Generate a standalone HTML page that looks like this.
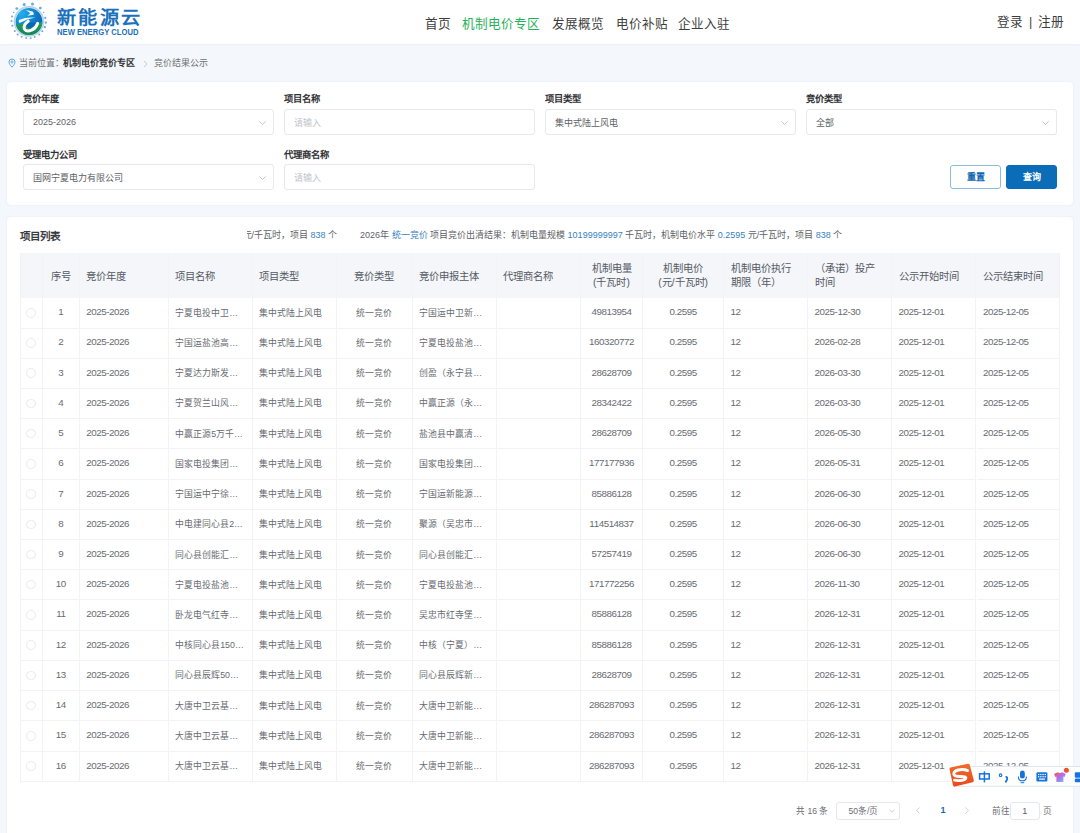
<!DOCTYPE html>
<html lang="zh-CN">
<head>
<meta charset="utf-8">
<style>
*{box-sizing:border-box;margin:0;padding:0}
html,body{width:1080px;height:833px;overflow:hidden}
body{background:#f4f7fc;font-family:"Liberation Sans",sans-serif;color:#606266;position:relative}
.abs{position:absolute;white-space:nowrap}
#hdr{position:absolute;left:0;top:0;width:1080px;height:44px;background:#fff;box-shadow:0 1px 2px rgba(0,40,100,.04)}
.brand{position:absolute;left:57px;top:4.5px;font-size:19.5px;font-weight:bold;color:#1b71bb;letter-spacing:1.6px;line-height:24px;transform:scale(.985,.93);transform-origin:0 20px}
.brand-en{position:absolute;left:57px;top:26.6px;font-size:9px;font-weight:bold;color:#1b71bb;line-height:10px;letter-spacing:0;transform:scaleX(.85);transform-origin:0 0}
.nav{position:absolute;top:15.5px;font-size:12.6px;line-height:17px;color:#3d3d3d}
.nav.on{color:#1fb257}
.bc{position:absolute;top:58.2px;font-size:9px;line-height:11px;color:#707070}
.card{position:absolute;left:7px;width:1066px;background:#fff;border-radius:4px;box-shadow:0 0 1.5px rgba(120,160,220,.22)}
.lbl{position:absolute;font-size:9.3px;font-weight:bold;color:#303133;line-height:12px;margin-top:0.3px}
.inp{position:absolute;width:250.5px;height:25.5px;border:1px solid #e6e8ed;border-radius:3px;background:#fff}
.inp span{position:absolute;left:9px;top:7px;font-size:9px;line-height:12px;color:#606266}
.inp span.ph{color:#c0c4cc}
.chev{position:absolute;right:6.5px;top:10.5px;width:7px;height:4px}
.btn{position:absolute;top:165px;width:51px;height:24px;border-radius:3px;font-size:9px;font-weight:bold;text-align:center;line-height:22px}
#tbl{position:absolute;left:20px;top:253.3px;width:1039.3px;height:528.52px}
.thead{position:absolute;background:#f4f6fa}
.c{position:absolute;border-right:1px solid #f1f3f7;border-bottom:1px solid #f1f3f7;display:flex;align-items:center;padding:0 6.4px;font-size:8.85px;color:#686b71;overflow:hidden;white-space:nowrap}
.c.h{font-size:10.3px;line-height:14.5px;color:#555a63;border-bottom-color:#f4f6fa}
.c.h span, .c.b span{display:block;width:100%}
.c.b span{position:relative;top:-0.6px}
.c.n span{top:-1.2px}
.c.n{font-size:9.8px;letter-spacing:-0.45px}
.radio{display:inline-block;width:9.5px;height:9.5px;border:1px solid #e8eaef;border-radius:50%;vertical-align:middle}
</style>
</head>
<body>
<div id="hdr">
  <svg class="abs" style="left:9px;top:1px" width="40" height="40" viewBox="0 0 40 40">
    <defs>
      <radialGradient id="gb" cx="0.3" cy="0.3" r="0.75">
        <stop offset="0" stop-color="#22b0ea"/>
        <stop offset="0.55" stop-color="#0d78c8"/>
        <stop offset="1" stop-color="#0a56a8"/>
      </radialGradient>
      <linearGradient id="gg" x1="0" y1="0" x2="0" y2="1">
        <stop offset="0" stop-color="#23a060"/>
        <stop offset="1" stop-color="#0c7a44"/>
      </linearGradient>
      <clipPath id="cp"><circle cx="20" cy="20.4" r="13.4"/></clipPath>
    </defs>
    <circle cx="20" cy="20.4" r="14.5" fill="none" stroke="#b5d3ec" stroke-width="1.6"/>
    <g fill="#6aaade">
      <circle cx="15.2" cy="3.6" r="1.5"/><circle cx="23.5" cy="3.1" r="1.5"/>
      <circle cx="7.8" cy="7.6" r="1.4"/><circle cx="31.3" cy="7.1" r="1.4"/>
      <circle cx="4.6" cy="11.4" r=".7"/><circle cx="34.6" cy="11.4" r=".7"/>
      <circle cx="3" cy="15.6" r="1"/><circle cx="2.5" cy="19.9" r="1"/><circle cx="3.3" cy="24.7" r="1"/>
      <circle cx="36.3" cy="16.9" r="1.1"/><circle cx="36.8" cy="21.7" r="1.1"/><circle cx="35.8" cy="26.2" r="1.1"/>
      <circle cx="5.8" cy="30" r="1"/><circle cx="8.6" cy="33.5" r="1"/><circle cx="12.6" cy="35.8" r="1"/><circle cx="17.2" cy="37" r="1"/><circle cx="21.7" cy="37.3" r="1"/><circle cx="25.7" cy="36" r="1"/><circle cx="30.3" cy="33.5" r="1"/><circle cx="33.3" cy="30.3" r="1"/>
    </g>
    <g clip-path="url(#cp)">
      <rect x="0" y="0" width="40" height="40" fill="url(#gb)"/>
      <path d="M0 23.9 L40 20.6 L40 40 L0 40Z" fill="url(#gg)"/>
      <path d="M16.9 9.1 L23.6 10.4 Q25.2 11.6 24.7 13.7 L18.4 14.8 L21.3 12.3 Z" fill="#fff" opacity=".93"/>
      <path d="M9.9 18.9 Q18 15.6 26.8 16.8 Q19 17.6 15.5 19.8 Q12.5 21 10.3 22 Q9.3 20.5 9.9 18.9Z" fill="#fff" opacity=".96"/>
      <path d="M18.6 21.5 Q16.6 25.4 18.8 26.8 Q21.8 27.6 25.2 25.2 Q26.8 23.6 27.4 21.6 Z" fill="#0c66b8"/>
      <path d="M19.2 20.2 Q14 23.6 15.4 28 Q17.4 31.2 22.6 29.2 Q27 27 28.6 22.4" fill="none" stroke="#fff" stroke-width="3" stroke-linecap="round"/>
    </g>
  </svg>
  <div class="brand">新能源云</div>
  <div class="brand-en">NEW ENERGY CLOUD</div>
  <div class="nav" style="left:425px">首页</div>
  <div class="nav on" style="left:462px">机制电价专区</div>
  <div class="nav" style="left:551.5px">发展概览</div>
  <div class="nav" style="left:615.5px">电价补贴</div>
  <div class="nav" style="left:678px;top:16px">企业入驻</div>
  <div class="nav" style="left:997px;top:13.8px">登录 <span style="padding:0 2.4px">|</span> 注册</div>
</div>

<svg class="abs" style="left:8px;top:58px" width="8" height="10" viewBox="0 0 8 10"><path d="M4 9.2 C2 7 1 5.5 1 4 A3 3 0 0 1 7 4 C7 5.5 6 7 4 9.2Z" fill="none" stroke="#5a9fd6" stroke-width=".9"/><circle cx="4" cy="4" r="1.1" fill="none" stroke="#5a9fd6" stroke-width=".8"/></svg>
<div class="bc" style="left:19px">当前位置：</div>
<div class="bc" style="left:63px;color:#303133;font-weight:bold">机制电价竞价专区</div>
<svg class="abs" style="left:143px;top:60px" width="5" height="8" viewBox="0 0 5 8"><path d="M1 1 L4 4 L1 7" fill="none" stroke="#b8bcc4" stroke-width=".8"/></svg>
<div class="bc" style="left:153.5px">竞价结果公示</div>

<div class="card" style="top:81.5px;height:123px">
</div>
<div class="lbl" style="left:23px;top:93px">竞价年度</div>
<div class="inp" style="left:23px;top:109px"><span style="top:6.4px">2025-2026</span><svg class="chev" viewBox="0 0 7 4"><path d="M.4 .4 L3.5 3.5 L6.6 .4" fill="none" stroke="#b8bcc4" stroke-width=".85"/></svg></div>
<div class="lbl" style="left:284px;top:93px">项目名称</div>
<div class="inp" style="left:284px;top:109px"><span class="ph">请输入</span></div>
<div class="lbl" style="left:545px;top:93px">项目类型</div>
<div class="inp" style="left:545px;top:109px"><span>集中式陆上风电</span><svg class="chev" viewBox="0 0 7 4"><path d="M.4 .4 L3.5 3.5 L6.6 .4" fill="none" stroke="#b8bcc4" stroke-width=".85"/></svg></div>
<div class="lbl" style="left:806px;top:93px">竞价类型</div>
<div class="inp" style="left:806px;top:109px"><span>全部</span><svg class="chev" viewBox="0 0 7 4"><path d="M.4 .4 L3.5 3.5 L6.6 .4" fill="none" stroke="#b8bcc4" stroke-width=".85"/></svg></div>

<div class="lbl" style="left:23px;top:148.5px">受理电力公司</div>
<div class="inp" style="left:23px;top:164px"><span>国网宁夏电力有限公司</span><svg class="chev" viewBox="0 0 7 4"><path d="M.4 .4 L3.5 3.5 L6.6 .4" fill="none" stroke="#b8bcc4" stroke-width=".85"/></svg></div>
<div class="lbl" style="left:284px;top:148.5px">代理商名称</div>
<div class="inp" style="left:284px;top:164px"><span class="ph">请输入</span></div>

<div class="btn" style="left:950px;border:1px solid #8cbbe0;color:#1168b3;background:#fff">重置</div>
<div class="btn" style="left:1006px;background:#0b6cb8;color:#fff;border:1px solid #0b6cb8">查询</div>

<div class="card" style="top:217px;height:700px"></div>
<div class="abs" style="left:20px;top:229.6px;font-size:10.5px;font-weight:bold;color:#383a3e;line-height:13px">项目列表</div>
<div class="abs" style="left:247px;top:229px;width:810px;height:13px;overflow:hidden">
  <div class="abs" style="left:-4.5px;top:0;font-size:9px;line-height:13px;color:#606266">元/千瓦时，项目 <b style="font-weight:normal;color:#3a7fc1">838</b> 个<span style="display:inline-block;width:23px"></span>2026年 <b style="font-weight:normal;color:#3a7fc1">统一竞价</b> 项目竞价出清结果：机制电量规模 <b style="font-weight:normal;color:#3a7fc1">10199999997</b> 千瓦时，机制电价水平 <b style="font-weight:normal;color:#3a7fc1">0.2595</b> 元/千瓦时，项目 <b style="font-weight:normal;color:#3a7fc1">838</b> 个</div>
</div>

<div id="tbl">
<div class="abs" style="left:0;top:0;width:1px;height:528.52px;background:#f1f3f7;z-index:2"></div>
<div class="thead" style="left:0;top:0;width:1039.80px;height:45.0px"></div>
<div class="c h" style="left:0.00px;top:0.00px;width:22.90px;height:45.00px;text-align:center"><span style="position:relative;top:2.1px"></span></div>
<div class="c h" style="left:22.90px;top:0.00px;width:36.90px;height:45.00px;text-align:center"><span style="position:relative;top:2.1px">序号</span></div>
<div class="c h" style="left:59.80px;top:0.00px;width:89.00px;height:45.00px;text-align:left"><span style="position:relative;top:2.1px">竞价年度</span></div>
<div class="c h" style="left:148.80px;top:0.00px;width:83.90px;height:45.00px;text-align:left"><span style="position:relative;top:2.1px">项目名称</span></div>
<div class="c h" style="left:232.70px;top:0.00px;width:84.10px;height:45.00px;text-align:left"><span style="position:relative;top:2.1px">项目类型</span></div>
<div class="c h" style="left:316.80px;top:0.00px;width:76.00px;height:45.00px;text-align:center"><span style="position:relative;top:2.1px">竞价类型</span></div>
<div class="c h" style="left:392.80px;top:0.00px;width:83.90px;height:45.00px;text-align:left"><span style="position:relative;top:2.1px">竞价申报主体</span></div>
<div class="c h" style="left:476.70px;top:0.00px;width:84.30px;height:45.00px;text-align:left"><span style="position:relative;top:2.1px">代理商名称</span></div>
<div class="c h" style="left:561.00px;top:0.00px;width:62.00px;height:45.00px;text-align:center"><span style="position:relative;top:1.1px">机制电量<br>(千瓦时)</span></div>
<div class="c h" style="left:623.00px;top:0.00px;width:81.20px;height:45.00px;text-align:center"><span style="position:relative;top:1.1px">机制电价<br>(元/千瓦时)</span></div>
<div class="c h" style="left:704.20px;top:0.00px;width:84.00px;height:45.00px;text-align:left"><span style="position:relative;top:1.1px">机制电价执行<br>期限（年）</span></div>
<div class="c h" style="left:788.20px;top:0.00px;width:84.00px;height:45.00px;text-align:left"><span style="position:relative;top:1.1px">（承诺）投产<br>时间</span></div>
<div class="c h" style="left:872.20px;top:0.00px;width:84.30px;height:45.00px;text-align:left"><span style="position:relative;top:2.1px">公示开始时间</span></div>
<div class="c h" style="left:956.50px;top:0.00px;width:83.30px;height:45.00px;text-align:left"><span style="position:relative;top:2.1px">公示结束时间</span></div>
<div class="c b" style="left:0.00px;top:45.00px;width:22.90px;height:30.22px;text-align:center"><span><i class="radio"></i></span></div>
<div class="c b n" style="left:22.90px;top:45.00px;width:36.90px;height:30.22px;text-align:center"><span>1</span></div>
<div class="c b n" style="left:59.80px;top:45.00px;width:89.00px;height:30.22px;text-align:left"><span>2025-2026</span></div>
<div class="c b" style="left:148.80px;top:45.00px;width:83.90px;height:30.22px;text-align:left"><span>宁夏电投中卫…</span></div>
<div class="c b" style="left:232.70px;top:45.00px;width:84.10px;height:30.22px;text-align:left"><span>集中式陆上风电</span></div>
<div class="c b" style="left:316.80px;top:45.00px;width:76.00px;height:30.22px;text-align:center"><span>统一竞价</span></div>
<div class="c b" style="left:392.80px;top:45.00px;width:83.90px;height:30.22px;text-align:left"><span>宁国运中卫新…</span></div>
<div class="c b" style="left:476.70px;top:45.00px;width:84.30px;height:30.22px;text-align:left"><span></span></div>
<div class="c b n" style="left:561.00px;top:45.00px;width:62.00px;height:30.22px;text-align:center"><span>49813954</span></div>
<div class="c b n" style="left:623.00px;top:45.00px;width:81.20px;height:30.22px;text-align:center"><span>0.2595</span></div>
<div class="c b n" style="left:704.20px;top:45.00px;width:84.00px;height:30.22px;text-align:left"><span>12</span></div>
<div class="c b n" style="left:788.20px;top:45.00px;width:84.00px;height:30.22px;text-align:left"><span>2025-12-30</span></div>
<div class="c b n" style="left:872.20px;top:45.00px;width:84.30px;height:30.22px;text-align:left"><span>2025-12-01</span></div>
<div class="c b n" style="left:956.50px;top:45.00px;width:83.30px;height:30.22px;text-align:left"><span>2025-12-05</span></div>
<div class="c b" style="left:0.00px;top:75.22px;width:22.90px;height:30.22px;text-align:center"><span><i class="radio"></i></span></div>
<div class="c b n" style="left:22.90px;top:75.22px;width:36.90px;height:30.22px;text-align:center"><span>2</span></div>
<div class="c b n" style="left:59.80px;top:75.22px;width:89.00px;height:30.22px;text-align:left"><span>2025-2026</span></div>
<div class="c b" style="left:148.80px;top:75.22px;width:83.90px;height:30.22px;text-align:left"><span>宁国运盐池高…</span></div>
<div class="c b" style="left:232.70px;top:75.22px;width:84.10px;height:30.22px;text-align:left"><span>集中式陆上风电</span></div>
<div class="c b" style="left:316.80px;top:75.22px;width:76.00px;height:30.22px;text-align:center"><span>统一竞价</span></div>
<div class="c b" style="left:392.80px;top:75.22px;width:83.90px;height:30.22px;text-align:left"><span>宁夏电投盐池…</span></div>
<div class="c b" style="left:476.70px;top:75.22px;width:84.30px;height:30.22px;text-align:left"><span></span></div>
<div class="c b n" style="left:561.00px;top:75.22px;width:62.00px;height:30.22px;text-align:center"><span>160320772</span></div>
<div class="c b n" style="left:623.00px;top:75.22px;width:81.20px;height:30.22px;text-align:center"><span>0.2595</span></div>
<div class="c b n" style="left:704.20px;top:75.22px;width:84.00px;height:30.22px;text-align:left"><span>12</span></div>
<div class="c b n" style="left:788.20px;top:75.22px;width:84.00px;height:30.22px;text-align:left"><span>2026-02-28</span></div>
<div class="c b n" style="left:872.20px;top:75.22px;width:84.30px;height:30.22px;text-align:left"><span>2025-12-01</span></div>
<div class="c b n" style="left:956.50px;top:75.22px;width:83.30px;height:30.22px;text-align:left"><span>2025-12-05</span></div>
<div class="c b" style="left:0.00px;top:105.44px;width:22.90px;height:30.22px;text-align:center"><span><i class="radio"></i></span></div>
<div class="c b n" style="left:22.90px;top:105.44px;width:36.90px;height:30.22px;text-align:center"><span>3</span></div>
<div class="c b n" style="left:59.80px;top:105.44px;width:89.00px;height:30.22px;text-align:left"><span>2025-2026</span></div>
<div class="c b" style="left:148.80px;top:105.44px;width:83.90px;height:30.22px;text-align:left"><span>宁夏达力斯发…</span></div>
<div class="c b" style="left:232.70px;top:105.44px;width:84.10px;height:30.22px;text-align:left"><span>集中式陆上风电</span></div>
<div class="c b" style="left:316.80px;top:105.44px;width:76.00px;height:30.22px;text-align:center"><span>统一竞价</span></div>
<div class="c b" style="left:392.80px;top:105.44px;width:83.90px;height:30.22px;text-align:left"><span>创盈（永宁县…</span></div>
<div class="c b" style="left:476.70px;top:105.44px;width:84.30px;height:30.22px;text-align:left"><span></span></div>
<div class="c b n" style="left:561.00px;top:105.44px;width:62.00px;height:30.22px;text-align:center"><span>28628709</span></div>
<div class="c b n" style="left:623.00px;top:105.44px;width:81.20px;height:30.22px;text-align:center"><span>0.2595</span></div>
<div class="c b n" style="left:704.20px;top:105.44px;width:84.00px;height:30.22px;text-align:left"><span>12</span></div>
<div class="c b n" style="left:788.20px;top:105.44px;width:84.00px;height:30.22px;text-align:left"><span>2026-03-30</span></div>
<div class="c b n" style="left:872.20px;top:105.44px;width:84.30px;height:30.22px;text-align:left"><span>2025-12-01</span></div>
<div class="c b n" style="left:956.50px;top:105.44px;width:83.30px;height:30.22px;text-align:left"><span>2025-12-05</span></div>
<div class="c b" style="left:0.00px;top:135.66px;width:22.90px;height:30.22px;text-align:center"><span><i class="radio"></i></span></div>
<div class="c b n" style="left:22.90px;top:135.66px;width:36.90px;height:30.22px;text-align:center"><span>4</span></div>
<div class="c b n" style="left:59.80px;top:135.66px;width:89.00px;height:30.22px;text-align:left"><span>2025-2026</span></div>
<div class="c b" style="left:148.80px;top:135.66px;width:83.90px;height:30.22px;text-align:left"><span>宁夏贺兰山风…</span></div>
<div class="c b" style="left:232.70px;top:135.66px;width:84.10px;height:30.22px;text-align:left"><span>集中式陆上风电</span></div>
<div class="c b" style="left:316.80px;top:135.66px;width:76.00px;height:30.22px;text-align:center"><span>统一竞价</span></div>
<div class="c b" style="left:392.80px;top:135.66px;width:83.90px;height:30.22px;text-align:left"><span>中赢正源（永…</span></div>
<div class="c b" style="left:476.70px;top:135.66px;width:84.30px;height:30.22px;text-align:left"><span></span></div>
<div class="c b n" style="left:561.00px;top:135.66px;width:62.00px;height:30.22px;text-align:center"><span>28342422</span></div>
<div class="c b n" style="left:623.00px;top:135.66px;width:81.20px;height:30.22px;text-align:center"><span>0.2595</span></div>
<div class="c b n" style="left:704.20px;top:135.66px;width:84.00px;height:30.22px;text-align:left"><span>12</span></div>
<div class="c b n" style="left:788.20px;top:135.66px;width:84.00px;height:30.22px;text-align:left"><span>2026-03-30</span></div>
<div class="c b n" style="left:872.20px;top:135.66px;width:84.30px;height:30.22px;text-align:left"><span>2025-12-01</span></div>
<div class="c b n" style="left:956.50px;top:135.66px;width:83.30px;height:30.22px;text-align:left"><span>2025-12-05</span></div>
<div class="c b" style="left:0.00px;top:165.88px;width:22.90px;height:30.22px;text-align:center"><span><i class="radio"></i></span></div>
<div class="c b n" style="left:22.90px;top:165.88px;width:36.90px;height:30.22px;text-align:center"><span>5</span></div>
<div class="c b n" style="left:59.80px;top:165.88px;width:89.00px;height:30.22px;text-align:left"><span>2025-2026</span></div>
<div class="c b" style="left:148.80px;top:165.88px;width:83.90px;height:30.22px;text-align:left"><span>中赢正源5万千…</span></div>
<div class="c b" style="left:232.70px;top:165.88px;width:84.10px;height:30.22px;text-align:left"><span>集中式陆上风电</span></div>
<div class="c b" style="left:316.80px;top:165.88px;width:76.00px;height:30.22px;text-align:center"><span>统一竞价</span></div>
<div class="c b" style="left:392.80px;top:165.88px;width:83.90px;height:30.22px;text-align:left"><span>盐池县中赢清…</span></div>
<div class="c b" style="left:476.70px;top:165.88px;width:84.30px;height:30.22px;text-align:left"><span></span></div>
<div class="c b n" style="left:561.00px;top:165.88px;width:62.00px;height:30.22px;text-align:center"><span>28628709</span></div>
<div class="c b n" style="left:623.00px;top:165.88px;width:81.20px;height:30.22px;text-align:center"><span>0.2595</span></div>
<div class="c b n" style="left:704.20px;top:165.88px;width:84.00px;height:30.22px;text-align:left"><span>12</span></div>
<div class="c b n" style="left:788.20px;top:165.88px;width:84.00px;height:30.22px;text-align:left"><span>2026-05-30</span></div>
<div class="c b n" style="left:872.20px;top:165.88px;width:84.30px;height:30.22px;text-align:left"><span>2025-12-01</span></div>
<div class="c b n" style="left:956.50px;top:165.88px;width:83.30px;height:30.22px;text-align:left"><span>2025-12-05</span></div>
<div class="c b" style="left:0.00px;top:196.10px;width:22.90px;height:30.22px;text-align:center"><span><i class="radio"></i></span></div>
<div class="c b n" style="left:22.90px;top:196.10px;width:36.90px;height:30.22px;text-align:center"><span>6</span></div>
<div class="c b n" style="left:59.80px;top:196.10px;width:89.00px;height:30.22px;text-align:left"><span>2025-2026</span></div>
<div class="c b" style="left:148.80px;top:196.10px;width:83.90px;height:30.22px;text-align:left"><span>国家电投集团…</span></div>
<div class="c b" style="left:232.70px;top:196.10px;width:84.10px;height:30.22px;text-align:left"><span>集中式陆上风电</span></div>
<div class="c b" style="left:316.80px;top:196.10px;width:76.00px;height:30.22px;text-align:center"><span>统一竞价</span></div>
<div class="c b" style="left:392.80px;top:196.10px;width:83.90px;height:30.22px;text-align:left"><span>国家电投集团…</span></div>
<div class="c b" style="left:476.70px;top:196.10px;width:84.30px;height:30.22px;text-align:left"><span></span></div>
<div class="c b n" style="left:561.00px;top:196.10px;width:62.00px;height:30.22px;text-align:center"><span>177177936</span></div>
<div class="c b n" style="left:623.00px;top:196.10px;width:81.20px;height:30.22px;text-align:center"><span>0.2595</span></div>
<div class="c b n" style="left:704.20px;top:196.10px;width:84.00px;height:30.22px;text-align:left"><span>12</span></div>
<div class="c b n" style="left:788.20px;top:196.10px;width:84.00px;height:30.22px;text-align:left"><span>2026-05-31</span></div>
<div class="c b n" style="left:872.20px;top:196.10px;width:84.30px;height:30.22px;text-align:left"><span>2025-12-01</span></div>
<div class="c b n" style="left:956.50px;top:196.10px;width:83.30px;height:30.22px;text-align:left"><span>2025-12-05</span></div>
<div class="c b" style="left:0.00px;top:226.32px;width:22.90px;height:30.22px;text-align:center"><span><i class="radio"></i></span></div>
<div class="c b n" style="left:22.90px;top:226.32px;width:36.90px;height:30.22px;text-align:center"><span>7</span></div>
<div class="c b n" style="left:59.80px;top:226.32px;width:89.00px;height:30.22px;text-align:left"><span>2025-2026</span></div>
<div class="c b" style="left:148.80px;top:226.32px;width:83.90px;height:30.22px;text-align:left"><span>宁国运中宁徐…</span></div>
<div class="c b" style="left:232.70px;top:226.32px;width:84.10px;height:30.22px;text-align:left"><span>集中式陆上风电</span></div>
<div class="c b" style="left:316.80px;top:226.32px;width:76.00px;height:30.22px;text-align:center"><span>统一竞价</span></div>
<div class="c b" style="left:392.80px;top:226.32px;width:83.90px;height:30.22px;text-align:left"><span>宁国运新能源…</span></div>
<div class="c b" style="left:476.70px;top:226.32px;width:84.30px;height:30.22px;text-align:left"><span></span></div>
<div class="c b n" style="left:561.00px;top:226.32px;width:62.00px;height:30.22px;text-align:center"><span>85886128</span></div>
<div class="c b n" style="left:623.00px;top:226.32px;width:81.20px;height:30.22px;text-align:center"><span>0.2595</span></div>
<div class="c b n" style="left:704.20px;top:226.32px;width:84.00px;height:30.22px;text-align:left"><span>12</span></div>
<div class="c b n" style="left:788.20px;top:226.32px;width:84.00px;height:30.22px;text-align:left"><span>2026-06-30</span></div>
<div class="c b n" style="left:872.20px;top:226.32px;width:84.30px;height:30.22px;text-align:left"><span>2025-12-01</span></div>
<div class="c b n" style="left:956.50px;top:226.32px;width:83.30px;height:30.22px;text-align:left"><span>2025-12-05</span></div>
<div class="c b" style="left:0.00px;top:256.54px;width:22.90px;height:30.22px;text-align:center"><span><i class="radio"></i></span></div>
<div class="c b n" style="left:22.90px;top:256.54px;width:36.90px;height:30.22px;text-align:center"><span>8</span></div>
<div class="c b n" style="left:59.80px;top:256.54px;width:89.00px;height:30.22px;text-align:left"><span>2025-2026</span></div>
<div class="c b" style="left:148.80px;top:256.54px;width:83.90px;height:30.22px;text-align:left"><span>中电建同心县2…</span></div>
<div class="c b" style="left:232.70px;top:256.54px;width:84.10px;height:30.22px;text-align:left"><span>集中式陆上风电</span></div>
<div class="c b" style="left:316.80px;top:256.54px;width:76.00px;height:30.22px;text-align:center"><span>统一竞价</span></div>
<div class="c b" style="left:392.80px;top:256.54px;width:83.90px;height:30.22px;text-align:left"><span>聚源（吴忠市…</span></div>
<div class="c b" style="left:476.70px;top:256.54px;width:84.30px;height:30.22px;text-align:left"><span></span></div>
<div class="c b n" style="left:561.00px;top:256.54px;width:62.00px;height:30.22px;text-align:center"><span>114514837</span></div>
<div class="c b n" style="left:623.00px;top:256.54px;width:81.20px;height:30.22px;text-align:center"><span>0.2595</span></div>
<div class="c b n" style="left:704.20px;top:256.54px;width:84.00px;height:30.22px;text-align:left"><span>12</span></div>
<div class="c b n" style="left:788.20px;top:256.54px;width:84.00px;height:30.22px;text-align:left"><span>2026-06-30</span></div>
<div class="c b n" style="left:872.20px;top:256.54px;width:84.30px;height:30.22px;text-align:left"><span>2025-12-01</span></div>
<div class="c b n" style="left:956.50px;top:256.54px;width:83.30px;height:30.22px;text-align:left"><span>2025-12-05</span></div>
<div class="c b" style="left:0.00px;top:286.76px;width:22.90px;height:30.22px;text-align:center"><span><i class="radio"></i></span></div>
<div class="c b n" style="left:22.90px;top:286.76px;width:36.90px;height:30.22px;text-align:center"><span>9</span></div>
<div class="c b n" style="left:59.80px;top:286.76px;width:89.00px;height:30.22px;text-align:left"><span>2025-2026</span></div>
<div class="c b" style="left:148.80px;top:286.76px;width:83.90px;height:30.22px;text-align:left"><span>同心县创能汇…</span></div>
<div class="c b" style="left:232.70px;top:286.76px;width:84.10px;height:30.22px;text-align:left"><span>集中式陆上风电</span></div>
<div class="c b" style="left:316.80px;top:286.76px;width:76.00px;height:30.22px;text-align:center"><span>统一竞价</span></div>
<div class="c b" style="left:392.80px;top:286.76px;width:83.90px;height:30.22px;text-align:left"><span>同心县创能汇…</span></div>
<div class="c b" style="left:476.70px;top:286.76px;width:84.30px;height:30.22px;text-align:left"><span></span></div>
<div class="c b n" style="left:561.00px;top:286.76px;width:62.00px;height:30.22px;text-align:center"><span>57257419</span></div>
<div class="c b n" style="left:623.00px;top:286.76px;width:81.20px;height:30.22px;text-align:center"><span>0.2595</span></div>
<div class="c b n" style="left:704.20px;top:286.76px;width:84.00px;height:30.22px;text-align:left"><span>12</span></div>
<div class="c b n" style="left:788.20px;top:286.76px;width:84.00px;height:30.22px;text-align:left"><span>2026-06-30</span></div>
<div class="c b n" style="left:872.20px;top:286.76px;width:84.30px;height:30.22px;text-align:left"><span>2025-12-01</span></div>
<div class="c b n" style="left:956.50px;top:286.76px;width:83.30px;height:30.22px;text-align:left"><span>2025-12-05</span></div>
<div class="c b" style="left:0.00px;top:316.98px;width:22.90px;height:30.22px;text-align:center"><span><i class="radio"></i></span></div>
<div class="c b n" style="left:22.90px;top:316.98px;width:36.90px;height:30.22px;text-align:center"><span>10</span></div>
<div class="c b n" style="left:59.80px;top:316.98px;width:89.00px;height:30.22px;text-align:left"><span>2025-2026</span></div>
<div class="c b" style="left:148.80px;top:316.98px;width:83.90px;height:30.22px;text-align:left"><span>宁夏电投盐池…</span></div>
<div class="c b" style="left:232.70px;top:316.98px;width:84.10px;height:30.22px;text-align:left"><span>集中式陆上风电</span></div>
<div class="c b" style="left:316.80px;top:316.98px;width:76.00px;height:30.22px;text-align:center"><span>统一竞价</span></div>
<div class="c b" style="left:392.80px;top:316.98px;width:83.90px;height:30.22px;text-align:left"><span>宁夏电投盐池…</span></div>
<div class="c b" style="left:476.70px;top:316.98px;width:84.30px;height:30.22px;text-align:left"><span></span></div>
<div class="c b n" style="left:561.00px;top:316.98px;width:62.00px;height:30.22px;text-align:center"><span>171772256</span></div>
<div class="c b n" style="left:623.00px;top:316.98px;width:81.20px;height:30.22px;text-align:center"><span>0.2595</span></div>
<div class="c b n" style="left:704.20px;top:316.98px;width:84.00px;height:30.22px;text-align:left"><span>12</span></div>
<div class="c b n" style="left:788.20px;top:316.98px;width:84.00px;height:30.22px;text-align:left"><span>2026-11-30</span></div>
<div class="c b n" style="left:872.20px;top:316.98px;width:84.30px;height:30.22px;text-align:left"><span>2025-12-01</span></div>
<div class="c b n" style="left:956.50px;top:316.98px;width:83.30px;height:30.22px;text-align:left"><span>2025-12-05</span></div>
<div class="c b" style="left:0.00px;top:347.20px;width:22.90px;height:30.22px;text-align:center"><span><i class="radio"></i></span></div>
<div class="c b n" style="left:22.90px;top:347.20px;width:36.90px;height:30.22px;text-align:center"><span>11</span></div>
<div class="c b n" style="left:59.80px;top:347.20px;width:89.00px;height:30.22px;text-align:left"><span>2025-2026</span></div>
<div class="c b" style="left:148.80px;top:347.20px;width:83.90px;height:30.22px;text-align:left"><span>卧龙电气红寺…</span></div>
<div class="c b" style="left:232.70px;top:347.20px;width:84.10px;height:30.22px;text-align:left"><span>集中式陆上风电</span></div>
<div class="c b" style="left:316.80px;top:347.20px;width:76.00px;height:30.22px;text-align:center"><span>统一竞价</span></div>
<div class="c b" style="left:392.80px;top:347.20px;width:83.90px;height:30.22px;text-align:left"><span>吴忠市红寺堡…</span></div>
<div class="c b" style="left:476.70px;top:347.20px;width:84.30px;height:30.22px;text-align:left"><span></span></div>
<div class="c b n" style="left:561.00px;top:347.20px;width:62.00px;height:30.22px;text-align:center"><span>85886128</span></div>
<div class="c b n" style="left:623.00px;top:347.20px;width:81.20px;height:30.22px;text-align:center"><span>0.2595</span></div>
<div class="c b n" style="left:704.20px;top:347.20px;width:84.00px;height:30.22px;text-align:left"><span>12</span></div>
<div class="c b n" style="left:788.20px;top:347.20px;width:84.00px;height:30.22px;text-align:left"><span>2026-12-31</span></div>
<div class="c b n" style="left:872.20px;top:347.20px;width:84.30px;height:30.22px;text-align:left"><span>2025-12-01</span></div>
<div class="c b n" style="left:956.50px;top:347.20px;width:83.30px;height:30.22px;text-align:left"><span>2025-12-05</span></div>
<div class="c b" style="left:0.00px;top:377.42px;width:22.90px;height:30.22px;text-align:center"><span><i class="radio"></i></span></div>
<div class="c b n" style="left:22.90px;top:377.42px;width:36.90px;height:30.22px;text-align:center"><span>12</span></div>
<div class="c b n" style="left:59.80px;top:377.42px;width:89.00px;height:30.22px;text-align:left"><span>2025-2026</span></div>
<div class="c b" style="left:148.80px;top:377.42px;width:83.90px;height:30.22px;text-align:left"><span>中核同心县150…</span></div>
<div class="c b" style="left:232.70px;top:377.42px;width:84.10px;height:30.22px;text-align:left"><span>集中式陆上风电</span></div>
<div class="c b" style="left:316.80px;top:377.42px;width:76.00px;height:30.22px;text-align:center"><span>统一竞价</span></div>
<div class="c b" style="left:392.80px;top:377.42px;width:83.90px;height:30.22px;text-align:left"><span>中核（宁夏）…</span></div>
<div class="c b" style="left:476.70px;top:377.42px;width:84.30px;height:30.22px;text-align:left"><span></span></div>
<div class="c b n" style="left:561.00px;top:377.42px;width:62.00px;height:30.22px;text-align:center"><span>85886128</span></div>
<div class="c b n" style="left:623.00px;top:377.42px;width:81.20px;height:30.22px;text-align:center"><span>0.2595</span></div>
<div class="c b n" style="left:704.20px;top:377.42px;width:84.00px;height:30.22px;text-align:left"><span>12</span></div>
<div class="c b n" style="left:788.20px;top:377.42px;width:84.00px;height:30.22px;text-align:left"><span>2026-12-31</span></div>
<div class="c b n" style="left:872.20px;top:377.42px;width:84.30px;height:30.22px;text-align:left"><span>2025-12-01</span></div>
<div class="c b n" style="left:956.50px;top:377.42px;width:83.30px;height:30.22px;text-align:left"><span>2025-12-05</span></div>
<div class="c b" style="left:0.00px;top:407.64px;width:22.90px;height:30.22px;text-align:center"><span><i class="radio"></i></span></div>
<div class="c b n" style="left:22.90px;top:407.64px;width:36.90px;height:30.22px;text-align:center"><span>13</span></div>
<div class="c b n" style="left:59.80px;top:407.64px;width:89.00px;height:30.22px;text-align:left"><span>2025-2026</span></div>
<div class="c b" style="left:148.80px;top:407.64px;width:83.90px;height:30.22px;text-align:left"><span>同心县辰辉50…</span></div>
<div class="c b" style="left:232.70px;top:407.64px;width:84.10px;height:30.22px;text-align:left"><span>集中式陆上风电</span></div>
<div class="c b" style="left:316.80px;top:407.64px;width:76.00px;height:30.22px;text-align:center"><span>统一竞价</span></div>
<div class="c b" style="left:392.80px;top:407.64px;width:83.90px;height:30.22px;text-align:left"><span>同心县辰辉新…</span></div>
<div class="c b" style="left:476.70px;top:407.64px;width:84.30px;height:30.22px;text-align:left"><span></span></div>
<div class="c b n" style="left:561.00px;top:407.64px;width:62.00px;height:30.22px;text-align:center"><span>28628709</span></div>
<div class="c b n" style="left:623.00px;top:407.64px;width:81.20px;height:30.22px;text-align:center"><span>0.2595</span></div>
<div class="c b n" style="left:704.20px;top:407.64px;width:84.00px;height:30.22px;text-align:left"><span>12</span></div>
<div class="c b n" style="left:788.20px;top:407.64px;width:84.00px;height:30.22px;text-align:left"><span>2026-12-31</span></div>
<div class="c b n" style="left:872.20px;top:407.64px;width:84.30px;height:30.22px;text-align:left"><span>2025-12-01</span></div>
<div class="c b n" style="left:956.50px;top:407.64px;width:83.30px;height:30.22px;text-align:left"><span>2025-12-05</span></div>
<div class="c b" style="left:0.00px;top:437.86px;width:22.90px;height:30.22px;text-align:center"><span><i class="radio"></i></span></div>
<div class="c b n" style="left:22.90px;top:437.86px;width:36.90px;height:30.22px;text-align:center"><span>14</span></div>
<div class="c b n" style="left:59.80px;top:437.86px;width:89.00px;height:30.22px;text-align:left"><span>2025-2026</span></div>
<div class="c b" style="left:148.80px;top:437.86px;width:83.90px;height:30.22px;text-align:left"><span>大唐中卫云基…</span></div>
<div class="c b" style="left:232.70px;top:437.86px;width:84.10px;height:30.22px;text-align:left"><span>集中式陆上风电</span></div>
<div class="c b" style="left:316.80px;top:437.86px;width:76.00px;height:30.22px;text-align:center"><span>统一竞价</span></div>
<div class="c b" style="left:392.80px;top:437.86px;width:83.90px;height:30.22px;text-align:left"><span>大唐中卫新能…</span></div>
<div class="c b" style="left:476.70px;top:437.86px;width:84.30px;height:30.22px;text-align:left"><span></span></div>
<div class="c b n" style="left:561.00px;top:437.86px;width:62.00px;height:30.22px;text-align:center"><span>286287093</span></div>
<div class="c b n" style="left:623.00px;top:437.86px;width:81.20px;height:30.22px;text-align:center"><span>0.2595</span></div>
<div class="c b n" style="left:704.20px;top:437.86px;width:84.00px;height:30.22px;text-align:left"><span>12</span></div>
<div class="c b n" style="left:788.20px;top:437.86px;width:84.00px;height:30.22px;text-align:left"><span>2026-12-31</span></div>
<div class="c b n" style="left:872.20px;top:437.86px;width:84.30px;height:30.22px;text-align:left"><span>2025-12-01</span></div>
<div class="c b n" style="left:956.50px;top:437.86px;width:83.30px;height:30.22px;text-align:left"><span>2025-12-05</span></div>
<div class="c b" style="left:0.00px;top:468.08px;width:22.90px;height:30.22px;text-align:center"><span><i class="radio"></i></span></div>
<div class="c b n" style="left:22.90px;top:468.08px;width:36.90px;height:30.22px;text-align:center"><span>15</span></div>
<div class="c b n" style="left:59.80px;top:468.08px;width:89.00px;height:30.22px;text-align:left"><span>2025-2026</span></div>
<div class="c b" style="left:148.80px;top:468.08px;width:83.90px;height:30.22px;text-align:left"><span>大唐中卫云基…</span></div>
<div class="c b" style="left:232.70px;top:468.08px;width:84.10px;height:30.22px;text-align:left"><span>集中式陆上风电</span></div>
<div class="c b" style="left:316.80px;top:468.08px;width:76.00px;height:30.22px;text-align:center"><span>统一竞价</span></div>
<div class="c b" style="left:392.80px;top:468.08px;width:83.90px;height:30.22px;text-align:left"><span>大唐中卫新能…</span></div>
<div class="c b" style="left:476.70px;top:468.08px;width:84.30px;height:30.22px;text-align:left"><span></span></div>
<div class="c b n" style="left:561.00px;top:468.08px;width:62.00px;height:30.22px;text-align:center"><span>286287093</span></div>
<div class="c b n" style="left:623.00px;top:468.08px;width:81.20px;height:30.22px;text-align:center"><span>0.2595</span></div>
<div class="c b n" style="left:704.20px;top:468.08px;width:84.00px;height:30.22px;text-align:left"><span>12</span></div>
<div class="c b n" style="left:788.20px;top:468.08px;width:84.00px;height:30.22px;text-align:left"><span>2026-12-31</span></div>
<div class="c b n" style="left:872.20px;top:468.08px;width:84.30px;height:30.22px;text-align:left"><span>2025-12-01</span></div>
<div class="c b n" style="left:956.50px;top:468.08px;width:83.30px;height:30.22px;text-align:left"><span>2025-12-05</span></div>
<div class="c b" style="left:0.00px;top:498.30px;width:22.90px;height:30.22px;text-align:center"><span><i class="radio"></i></span></div>
<div class="c b n" style="left:22.90px;top:498.30px;width:36.90px;height:30.22px;text-align:center"><span>16</span></div>
<div class="c b n" style="left:59.80px;top:498.30px;width:89.00px;height:30.22px;text-align:left"><span>2025-2026</span></div>
<div class="c b" style="left:148.80px;top:498.30px;width:83.90px;height:30.22px;text-align:left"><span>大唐中卫云基…</span></div>
<div class="c b" style="left:232.70px;top:498.30px;width:84.10px;height:30.22px;text-align:left"><span>集中式陆上风电</span></div>
<div class="c b" style="left:316.80px;top:498.30px;width:76.00px;height:30.22px;text-align:center"><span>统一竞价</span></div>
<div class="c b" style="left:392.80px;top:498.30px;width:83.90px;height:30.22px;text-align:left"><span>大唐中卫新能…</span></div>
<div class="c b" style="left:476.70px;top:498.30px;width:84.30px;height:30.22px;text-align:left"><span></span></div>
<div class="c b n" style="left:561.00px;top:498.30px;width:62.00px;height:30.22px;text-align:center"><span>286287093</span></div>
<div class="c b n" style="left:623.00px;top:498.30px;width:81.20px;height:30.22px;text-align:center"><span>0.2595</span></div>
<div class="c b n" style="left:704.20px;top:498.30px;width:84.00px;height:30.22px;text-align:left"><span>12</span></div>
<div class="c b n" style="left:788.20px;top:498.30px;width:84.00px;height:30.22px;text-align:left"><span>2026-12-31</span></div>
<div class="c b n" style="left:872.20px;top:498.30px;width:84.30px;height:30.22px;text-align:left"><span>2025-12-01</span></div>
<div class="c b n" style="left:956.50px;top:498.30px;width:83.30px;height:30.22px;text-align:left"><span>2025-12-05</span></div>
</div>

<!-- pagination -->
<div class="abs" style="left:796px;top:804.5px;font-size:8.6px;line-height:12px;color:#6a6d72">共 16 条</div>
<div class="abs" style="left:836px;top:801.5px;width:63.5px;height:18px;border:1px solid #e4e7ed;border-radius:3px"></div>
<div class="abs" style="left:848.5px;top:804.5px;font-size:8.6px;line-height:12px;color:#6a6d72">50条/页</div>
<svg class="abs" style="left:888.5px;top:808.5px" width="6" height="4" viewBox="0 0 6 4"><path d="M.3 .5 L3 3.3 L5.7 .5" fill="none" stroke="#c0c4cc" stroke-width=".8"/></svg>
<svg class="abs" style="left:915.5px;top:806.5px" width="4" height="7" viewBox="0 0 4 7"><path d="M3.5 .5 L.7 3.5 L3.5 6.5" fill="none" stroke="#c0c4cc" stroke-width=".8"/></svg>
<div class="abs" style="left:940.5px;top:804px;font-size:9px;line-height:12px;color:#1168b3;font-weight:bold">1</div>
<svg class="abs" style="left:965px;top:806.5px" width="4" height="7" viewBox="0 0 4 7"><path d="M.5 .5 L3.3 3.5 L.5 6.5" fill="none" stroke="#c0c4cc" stroke-width=".8"/></svg>
<div class="abs" style="left:991.5px;top:804.5px;font-size:8.6px;line-height:12px;color:#6a6d72">前往</div>
<div class="abs" style="left:1010px;top:801.5px;width:29.5px;height:18px;border:1px solid #e4e7ed;border-radius:3px;text-align:center;font-size:9px;line-height:16px;color:#606266">1</div>
<div class="abs" style="left:1042.5px;top:804.5px;font-size:8.6px;line-height:12px;color:#6a6d72">页</div>

<!-- sogou ime bar -->
<svg class="abs" style="left:944px;top:758px" width="136" height="34" viewBox="0 0 136 34">
  <defs>
    <linearGradient id="so" x1="0" y1="0" x2="0" y2="1"><stop offset="0" stop-color="#f46a2e"/><stop offset="1" stop-color="#e9481a"/></linearGradient>
    <linearGradient id="ts" x1="0" y1="0" x2="1" y2="1"><stop offset="0" stop-color="#f0603a"/><stop offset=".5" stop-color="#b36cf0"/><stop offset="1" stop-color="#5fd3f5"/></linearGradient>
  </defs>
  <rect x="12" y="8.4" width="130" height="19.8" fill="#fff"/>
  <rect x="12" y="7.9" width="130" height="1" fill="#dfe5ee"/>
  <rect x="12" y="27.8" width="130" height="1" fill="#dfe5ee"/>
  <path d="M6.5 9.4 Q5.2 9.9 5.5 11.2 L9 27.2 Q9.4 28.9 11 28.6 L28.6 24.2 Q30.2 23.8 29.8 22.2 L25.8 7 Q25.4 5.4 23.8 5.8 Z" fill="url(#so)"/>
  <path d="M23.5 12.6 Q20 10.8 14 12 Q8.8 13.6 10 16.6 Q11 18.6 16 18.5 Q21 18.2 21.8 19.6 Q22.2 21 19 22 Q14.5 23.2 10.5 22.2" fill="none" stroke="#fff" stroke-width="2.9" stroke-linecap="round" stroke-linejoin="round"/>
  <g fill="none" stroke="#1673dc" stroke-width="1.5">
    <rect x="35.6" y="15.8" width="9.6" height="5.2"/>
    <path d="M40.4 13.3 V24.4"/>
  </g>
  <circle cx="56.6" cy="17.2" r="1.3" fill="none" stroke="#1673dc" stroke-width="1.1"/>
  <path d="M62.2 18.8 Q63.6 19 63 21.6 L61.8 23.8" fill="none" stroke="#1673dc" stroke-width="1.8" stroke-linecap="round"/>
  <rect x="76" y="12.6" width="4.8" height="8" rx="2.4" fill="#1673dc"/>
  <path d="M74.4 18.4 Q74.4 22.8 78.4 22.8 Q82.4 22.8 82.4 18.4" fill="none" stroke="#1673dc" stroke-width="1.1"/>
  <rect x="76.6" y="24.2" width="3.6" height="1" fill="#1673dc"/>
  <rect x="92.4" y="14.3" width="11" height="9.2" rx="1.2" fill="#1673dc"/>
  <g fill="#fff">
    <rect x="94" y="15.9" width="1.3" height="1.2"/><rect x="96.2" y="15.9" width="1.3" height="1.2"/><rect x="98.4" y="15.9" width="1.3" height="1.2"/><rect x="100.6" y="15.9" width="1.3" height="1.2"/>
    <rect x="94" y="18.1" width="1.3" height="1.2"/><rect x="96.2" y="18.1" width="1.3" height="1.2"/><rect x="98.4" y="18.1" width="1.3" height="1.2"/><rect x="100.6" y="18.1" width="1.3" height="1.2"/>
    <rect x="95" y="20.5" width="6" height="1.2"/>
  </g>
  <path d="M110 16 L113.6 14.2 Q115.8 15.6 118.2 14.2 L121.8 16 L120.6 19 L119.4 18.4 L119.4 24 L112.4 24 L112.4 18.4 L111.2 19 Z" fill="url(#ts)"/>
  <circle cx="122.4" cy="12.3" r="2.5" fill="#f5502e"/>
  <rect x="130.8" y="14.2" width="6" height="5.6" rx="1.2" fill="#1673dc"/>
  <rect x="130.8" y="20.6" width="6" height="3.6" rx="1.2" fill="#1673dc"/>
</svg>
</body>
</html>
